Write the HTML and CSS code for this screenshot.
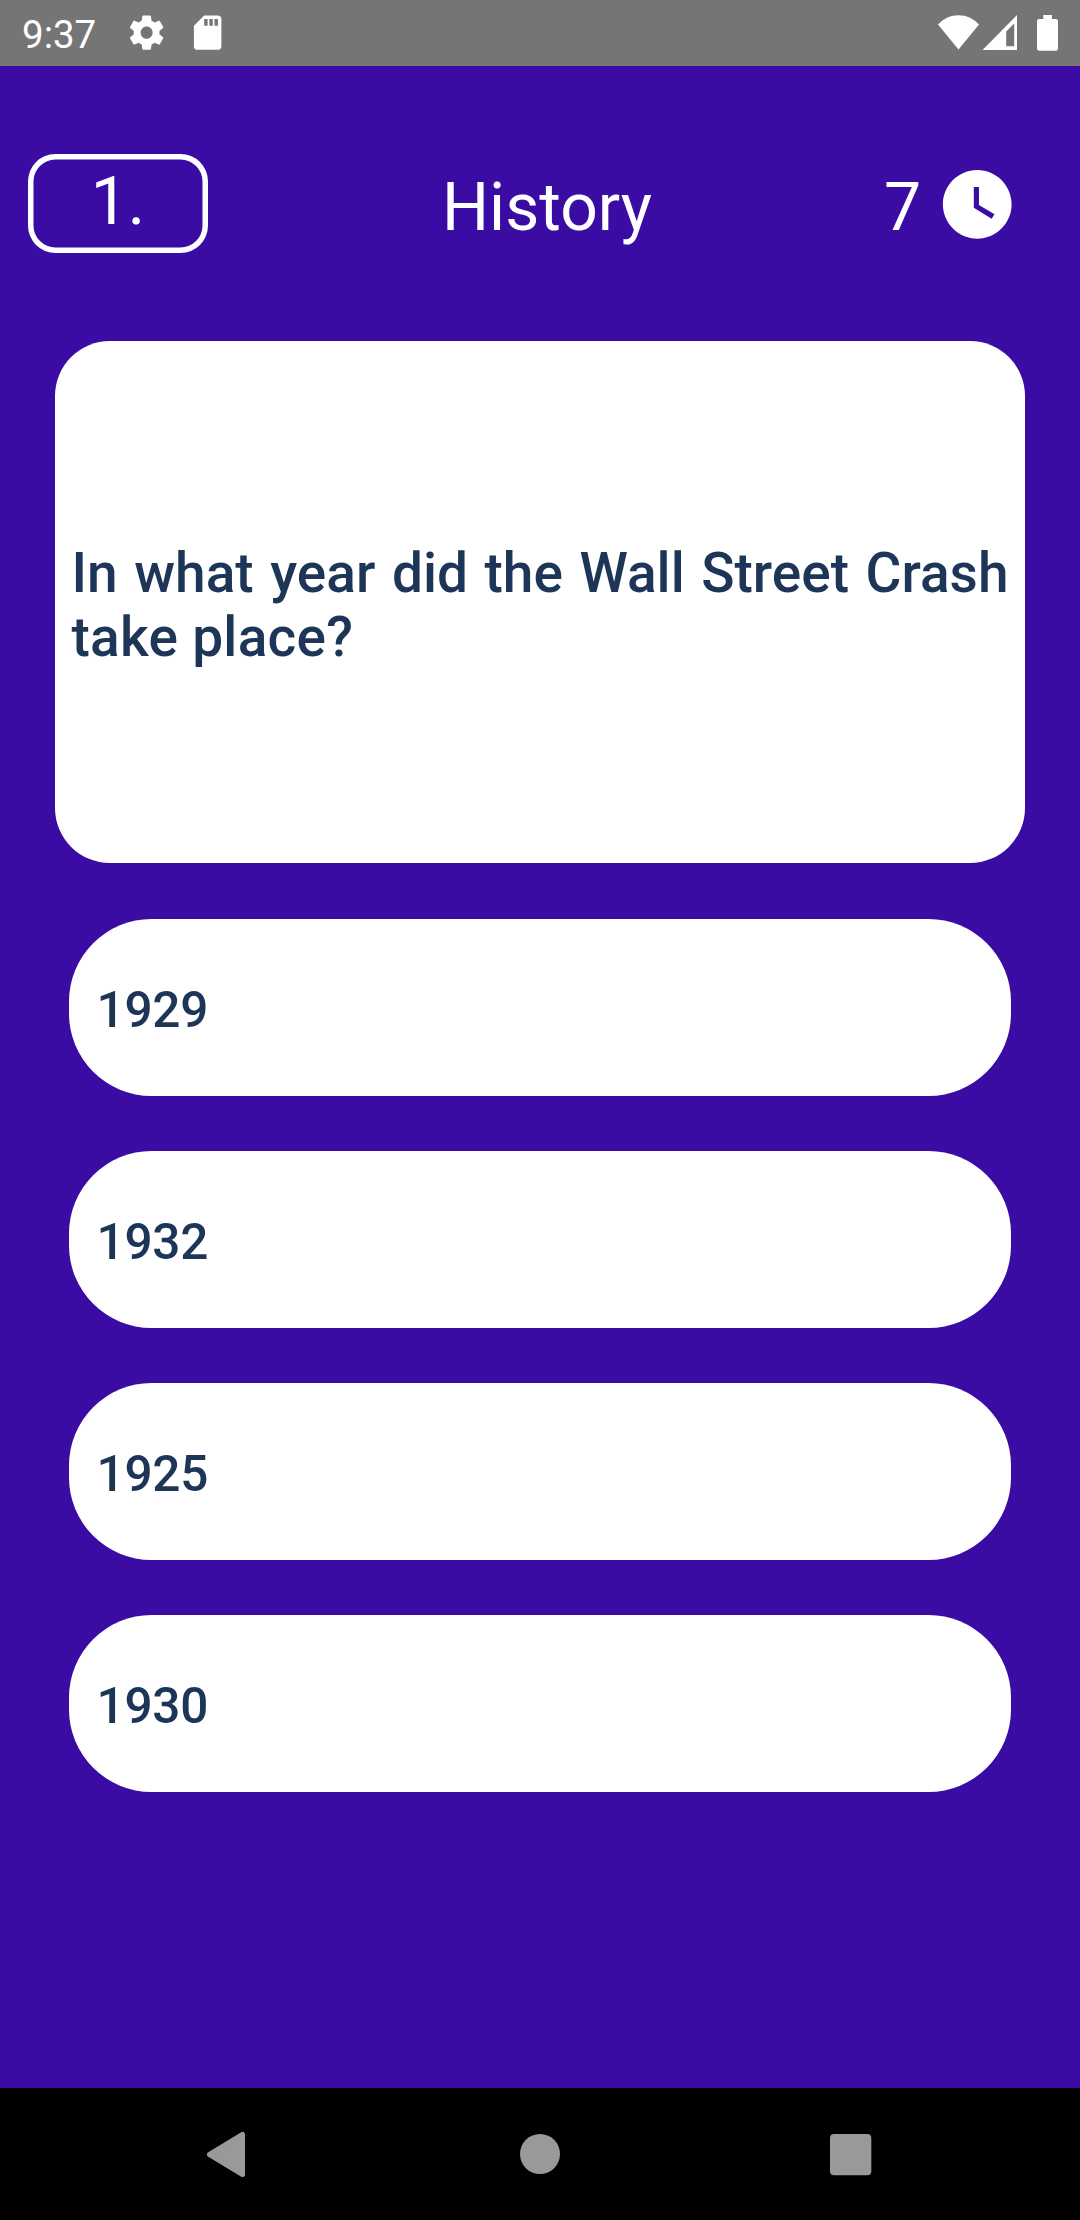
FILE: index.html
```html
<!DOCTYPE html>
<html lang="en">
<head>
<meta charset="utf-8">
<title>History quiz</title>
<link rel="stylesheet" href="styles.css">
</head>
<body>
<div class="screen">
  <div class="status-bar">
    <span class="status-time">9:37</span>
    <svg class="status-gear" viewBox="0 0 24 24"><path d="M19.43 12.98c.04-.32.07-.64.07-.98s-.03-.66-.07-.98l2.11-1.65c.19-.15.24-.42.12-.64l-2-3.46c-.12-.22-.39-.3-.61-.22l-2.49 1c-.52-.4-1.08-.73-1.69-.98l-.38-2.65C14.46 2.18 14.25 2 14 2h-4c-.25 0-.46.18-.49.42l-.38 2.65c-.61.25-1.17.59-1.69.98l-2.49-1c-.23-.09-.49 0-.61.22l-2 3.46c-.13.22-.07.49.12.64l2.11 1.65c-.04.32-.07.65-.07.98s.03.66.07.98l-2.11 1.65c-.19.15-.24.42-.12.64l2 3.46c.12.22.39.3.61.22l2.49-1c.52.4 1.08.73 1.69.98l.38 2.65c.03.24.24.42.49.42h4c.25 0 .46-.18.49-.42l.38-2.65c.61-.25 1.17-.59 1.69-.98l2.49 1c.23.09.49 0 .61-.22l2-3.46c.12-.22.07-.49-.12-.64l-2.11-1.65zM12 15.5c-1.93 0-3.5-1.57-3.5-3.5s1.57-3.5 3.5-3.5 3.5 1.57 3.5 3.5-1.57 3.5-3.5 3.5z"/></svg>
    <svg class="status-card" viewBox="0 0 24 24"><path d="M18 2h-8L4.02 8 4 20c0 1.1.9 2 2 2h12c1.1 0 2-.9 2-2V4c0-1.1-.9-2-2-2zm-6 6h-2V4h2v4zm3 0h-2V4h2v4zm3 0h-2V4h2v4z"/></svg>
    <svg class="status-signals" viewBox="0 0 122 40">
      <path d="M0 11.5C11-1 30-1 41 11.5L20.5 36.5z"/>
      <path fill-rule="evenodd" d="M44.500 37L79 2v35zM68.200 33.200h8V10.500l-8 8z"/>
      <path d="M105.300 2h8.600v4h3.900a2.200 2.200 0 0 1 2.200 2.200v27.400a2.200 2.200 0 0 1-2.200 2.200h-16.600a2.200 2.200 0 0 1-2.200-2.200V8.200a2.200 2.200 0 0 1 2.200-2.200h4.100z"/>
    </svg>
  </div>

  <main class="quiz">
    <header class="quiz-header">
      <div class="question-number">1.</div>
      <h1 class="category">History</h1>
      <div class="timer">
        <span>7</span>
        <svg class="clock" viewBox="0 0 24 24"><path d="M12 2C6.500 2 2 6.500 2 12s4.500 10 10 10 10-4.500 10-10S17.500 2 12 2zm4.200 14.200L11 13V7h1.500v5.200l4.500 2.700-.8 1.300z"/></svg>
      </div>
    </header>
    <section class="question"><p class="question-text">In what year did the Wall Street Crash take place?</p></section>
    <div class="answers">
      <button class="answer">1929</button>
      <button class="answer">1932</button>
      <button class="answer">1925</button>
      <button class="answer">1930</button>
    </div>
  </main>

  <nav class="nav-bar">
    <svg class="nav-icon" viewBox="0 0 60 60"><path class="back" d="M9.500 30.500L42.500 10.500v40z"/></svg>
    <svg class="nav-icon" viewBox="0 0 60 60"><circle cx="30" cy="30" r="20"/></svg>
    <svg class="nav-icon" viewBox="0 0 60 60"><rect x="10" y="10" width="41.300" height="41.300" rx="4"/></svg>
  </nav>
</div>
</body>
</html>
```
FILE: styles.css
```css
* { box-sizing: border-box; }

body {
  margin: 0;
  font-family: Roboto, sans-serif;
}

.screen {
  display: flex;
  flex-direction: column;
  width: 1080px;
  height: 2220px;
  background: #3a0ca3;
  color: #fff;
}

svg { display: block; flex: none; fill: currentColor; }

.status-bar {
  display: flex;
  align-items: center;
  height: 66px;
  padding: 0 20px 0 22px;
  background: #757575;
}

.status-time {
  width: 103.7px;
  padding-top: 3px;
  font-size: 38.5px;
  line-height: 45px;
}

.status-gear,
.status-card { width: 41.25px; height: 41.25px; }

.status-card { margin-left: 20px; }

.status-signals {
  width: 122px;
  height: 40px;
  margin-left: auto;
}

.quiz {
  flex: 1;
  display: flex;
  flex-direction: column;
}

.quiz-header {
  display: grid;
  grid-template-columns: 414px 442px 1fr;
  align-items: start;
  height: 275px;
  padding: 88px 0 0 28px;
}

.question-number {
  width: 180px;
  height: 99px;
  padding-top: 5px;
  border-radius: 27.5px;
  box-shadow: inset 0 0 0 5.5px #fff;
  font-size: 66px;
  line-height: 86px;
  text-align: center;
}

.category {
  margin: 15px 0 0;
  font-size: 66px;
  font-weight: 400;
  line-height: 77px;
}

.timer {
  display: flex;
  align-items: flex-start;
  gap: 14.5px;
  margin-top: 9px;
  font-size: 66px;
  line-height: 89px;
}

.clock { width: 82.5px; height: 82.5px; }

.question {
  display: flex;
  align-items: center;
  height: 522px;
  margin: 0 55px;
  padding: 6px 16.5px 0;
  background: #fff;
  border-radius: 55px;
  color: #1d3557;
}

.question-text {
  margin: 0;
  font-size: 55px;
  font-weight: 500;
  line-height: 64px;
  letter-spacing: 0.28px;
  text-align: justify;
}

.question-text::first-line { letter-spacing: 0; }

.answers {
  display: flex;
  flex-direction: column;
  gap: 55px;
  padding: 56px 69px 0;
}

.answer {
  height: 177px;
  padding: 5px 27.5px 0;
  border: 0;
  border-radius: 82.5px;
  background: #fff;
  color: #1d3557;
  font: 500 49.5px/58px Roboto, sans-serif;
  letter-spacing: -0.2px;
  text-align: left;
}

.nav-bar {
  display: flex;
  justify-content: space-between;
  align-items: center;
  height: 132px;
  padding: 0 200px;
  background: #000;
  color: #999;
}

.nav-icon { width: 60px; height: 60px; }

.back {
  stroke: currentColor;
  stroke-width: 5px;
  stroke-linejoin: round;
}
```
